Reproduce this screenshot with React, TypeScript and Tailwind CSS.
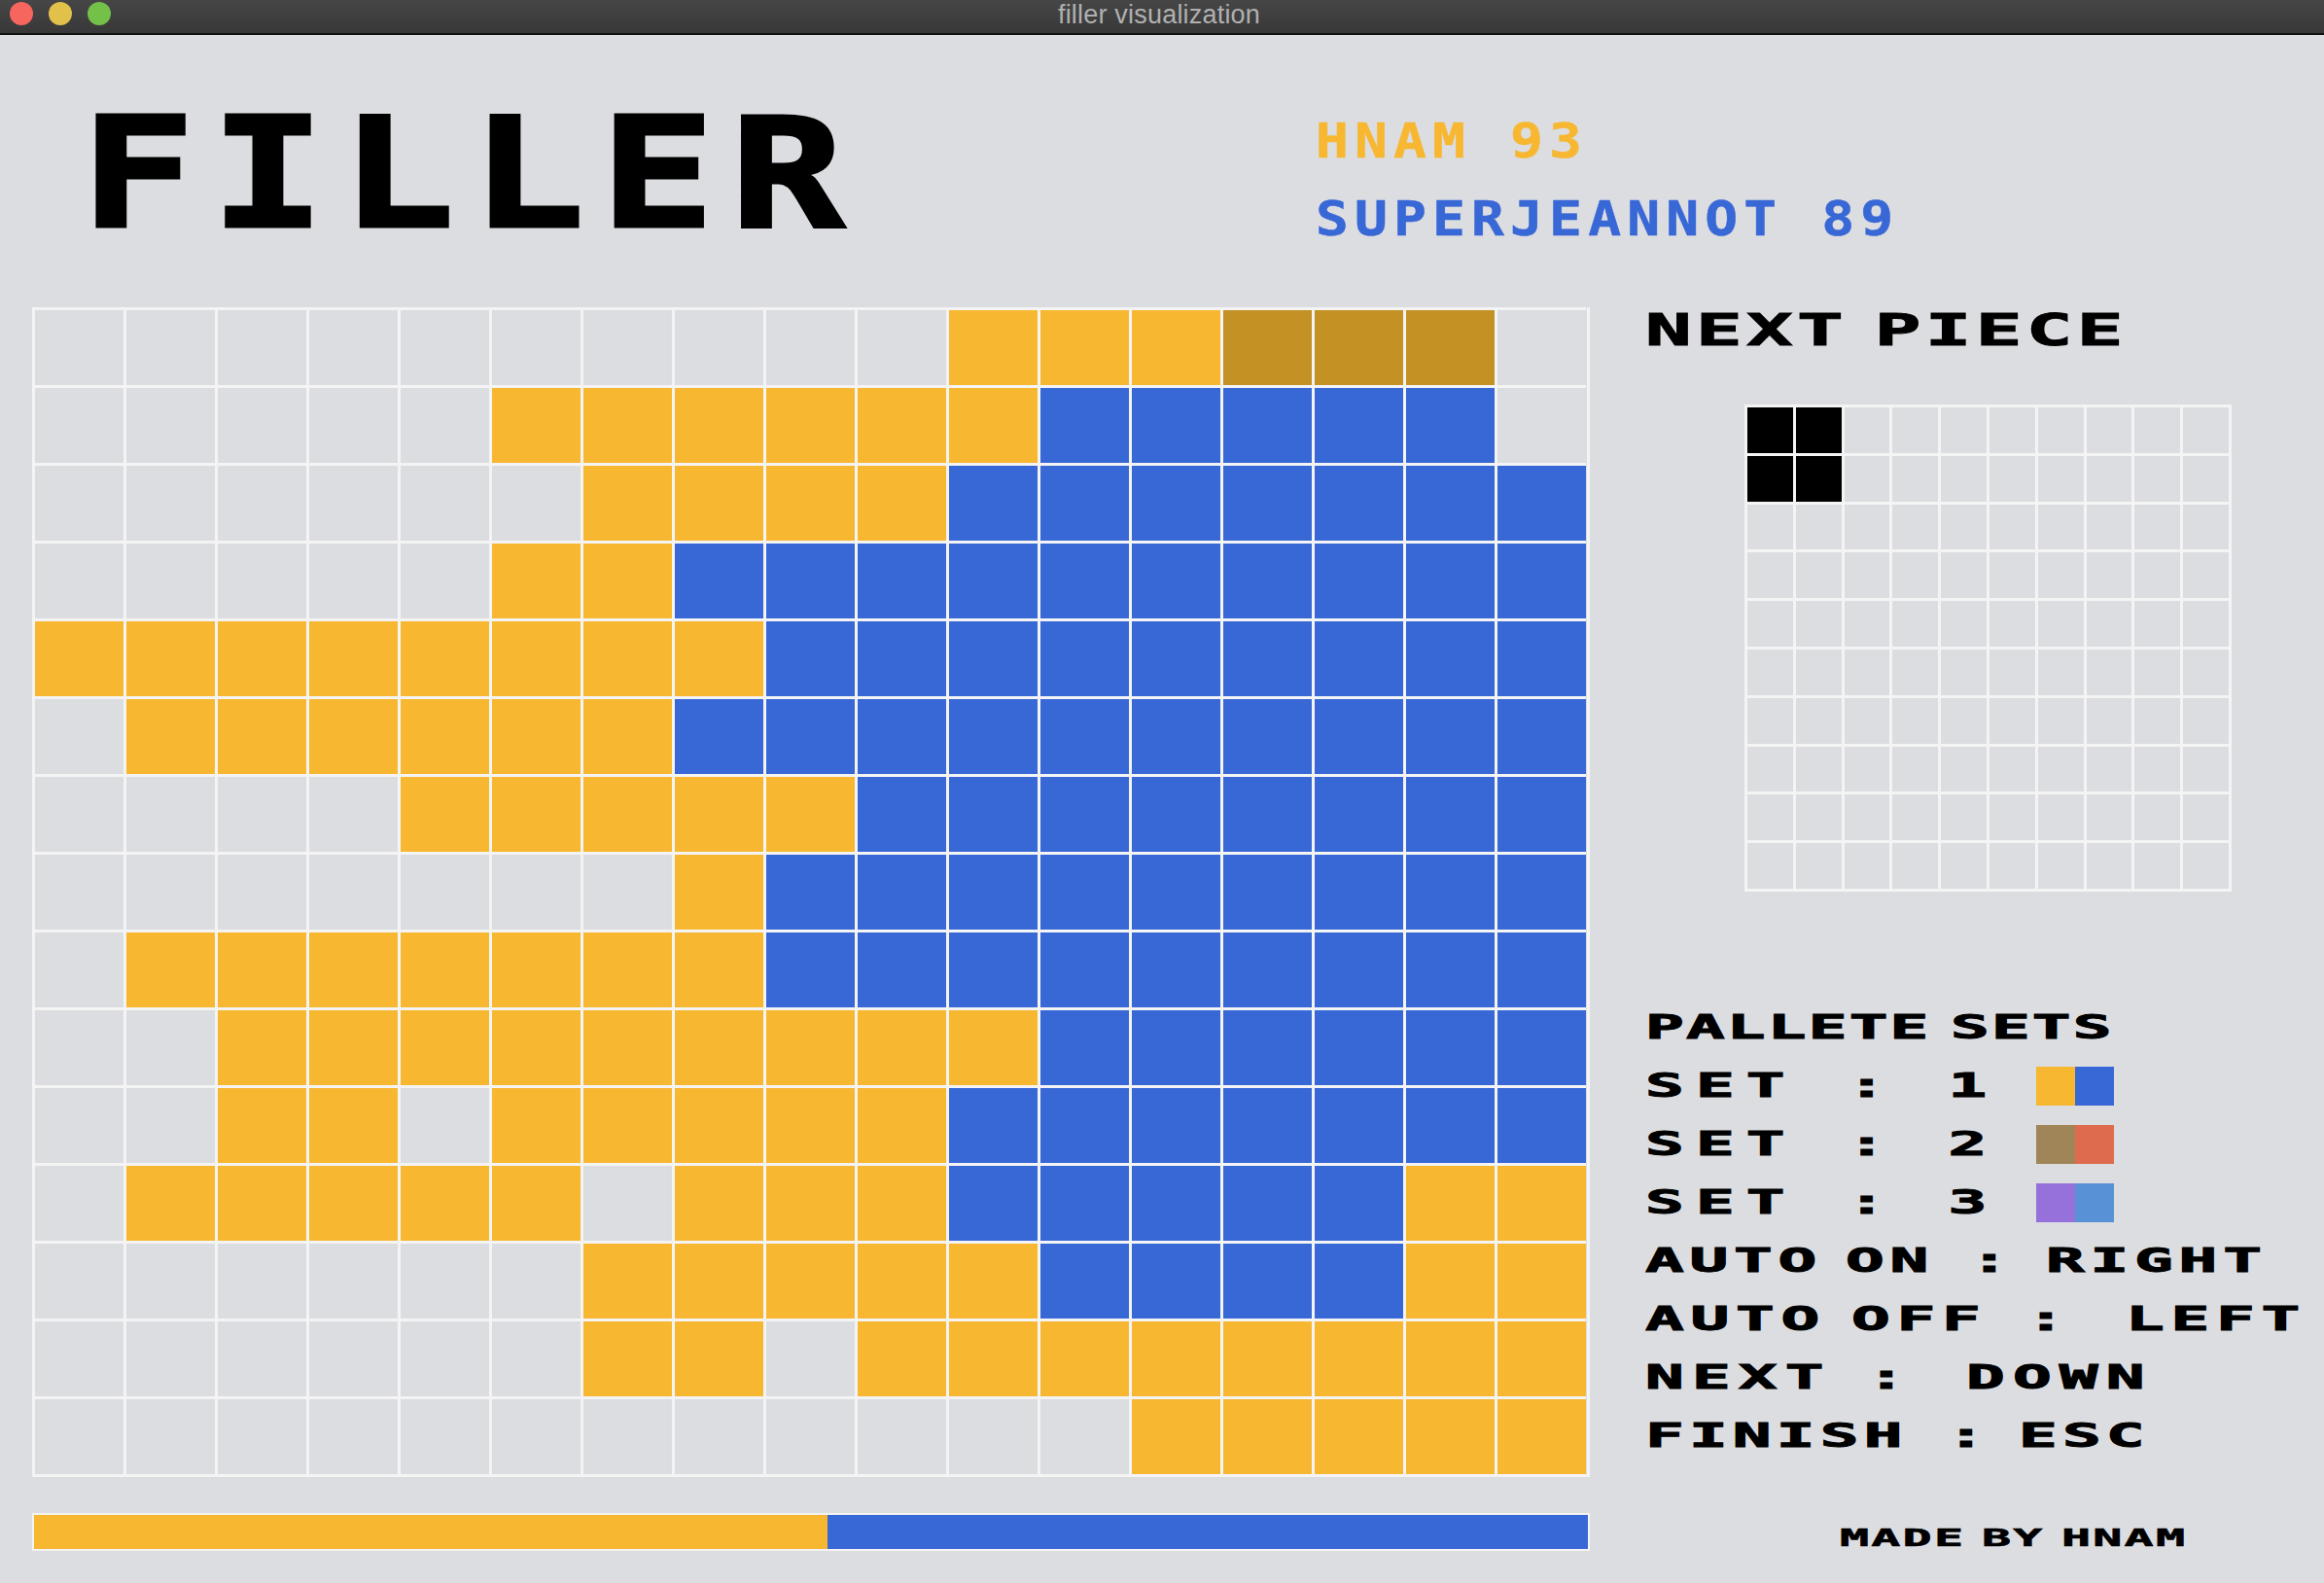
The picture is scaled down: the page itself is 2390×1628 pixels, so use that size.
const board = [
  "..........YYYDDD.",
  ".....YYYYYYBBBBB.",
  "......YYYYBBBBBBB",
  ".....YYBBBBBBBBBB",
  "YYYYYYYYBBBBBBBBB",
  ".YYYYYYBBBBBBBBBB",
  "....YYYYYBBBBBBBB",
  ".......YBBBBBBBBB",
  ".YYYYYYYBBBBBBBBB",
  "..YYYYYYYYYBBBBBB",
  "..YY.YYYYYBBBBBBB",
  ".YYYYY.YYYBBBBBYY",
  "......YYYYYBBBBYY",
  "......YY.YYYYYYYY",
  "............YYYYY",
];

const fills: Record<string, string> = {
  Y: "bg-[#f7b731]",
  B: "bg-[#3867d6]",
  D: "bg-[#c49125]",
};

function Board() {
  return (
    <div className="grid grid-cols-[repeat(17,94px)] grid-rows-[repeat(15,80px)] w-[1602px] border-r-[3px] border-b-[3px] border-[#f4f4f5]">
      {board.flatMap((row, y) =>
        row.split("").map((c, x) => (
          <div key={`${y}-${x}`} className="border-l-[3px] border-t-[3px] border-[#f4f4f5]">
            {c !== "." && <div className={`h-full ${fills[c]}`} />}
          </div>
        ))
      )}
    </div>
  );
}

function NextPiece() {
  const cells = Array.from({ length: 100 }, (_, i) => i);
  return (
    <div className="grid grid-cols-[repeat(10,49.8px)] grid-rows-[repeat(10,49.8px)] w-[501px] border-r-[3px] border-b-[3px] border-[#f4f4f5]">
      {cells.map((i) => (
        <div key={i} className="border-l-[3px] border-t-[3px] border-[#f4f4f5]">
          {(i === 0 || i === 1 || i === 10 || i === 11) && <div className="h-full bg-black" />}
        </div>
      ))}
    </div>
  );
}

function Swatch({ left, right }: { left: string; right: string }) {
  return (
    <div className="flex h-10 w-20">
      <div className={`w-10 ${left}`} />
      <div className={`w-10 ${right}`} />
    </div>
  );
}

const lineText =
  "flex origin-left scale-x-[2] whitespace-pre text-[33px] leading-none font-bold text-black [-webkit-text-stroke-width:1px]";

export default function App() {
  return (
    <div className="w-[2390px] h-[1628px] overflow-hidden bg-[#dcdde1] font-['DejaVu_Sans_Mono',monospace]">
      {/* Title bar */}
      <div className="relative flex h-9 items-center justify-center border-b-2 border-[#111] bg-gradient-to-b from-[#464646] to-[#383838] pr-[6px] pb-[4px]">
        <div className="absolute left-[10px] top-[2px] flex gap-4">
          <span className="h-6 w-6 rounded-full bg-[#f6655e]" />
          <span className="h-6 w-6 rounded-full bg-[#e2c14b]" />
          <span className="h-6 w-6 rounded-full bg-[#74c14a]" />
        </div>
        <span className="font-['Liberation_Sans',sans-serif] text-[27px] leading-none tracking-[0.2px] text-[#b0b0b0]">
          filler visualization
        </span>
      </div>

      {/* Header */}
      <div className="flex h-[280px]">
        <div className="w-[1353px] pl-[83px] pt-[65px]">
          <div className="origin-left scale-x-[1.25] whitespace-pre text-[156px] leading-none font-bold tracking-[13px] text-black [-webkit-text-stroke-width:3px]">
            FILLER
          </div>
        </div>
        <div className="origin-left scale-x-[1.15] whitespace-pre pt-[85px] text-[49px] leading-none font-bold tracking-[5.3px] [-webkit-text-stroke-width:0.5px]">
          <div className="text-[#f7b731]">HNAM 93</div>
          <div className="mt-[31px] text-[#3867d6]">SUPERJEANNOT 89</div>
        </div>
      </div>

      <div className="flex">
        {/* Left column */}
        <div className="ml-[33px] w-[1602px]">
          <Board />
          <div className="mt-[37px] flex h-[39px] border-2 border-[#f4f4f5]">
            <div className="w-[816px] bg-[#f7b731]" />
            <div className="flex-1 bg-[#3867d6]" />
          </div>
        </div>

        {/* Right column */}
        <div className="ml-[57px] w-[698px]">
          <div className="flex h-12 items-center">
            <div className="flex origin-left scale-x-[1.8] whitespace-pre text-[44px] leading-none font-bold tracking-[2.4px] text-black [-webkit-text-stroke-width:1px]">
              <span className="w-[131px]">NEXT</span>
              <span>PIECE</span>
            </div>
          </div>
          <div className="ml-[102px] mt-[52px]">
            <NextPiece />
          </div>

          <div className="mt-[110px]">
            <div className="flex h-[60px] items-center">
              <div className={`${lineText} tracking-[1.1px]`}>
                <span className="w-[157px]">PALLETE</span>
                <span>SETS</span>
              </div>
            </div>
            <div className="flex h-[60px] items-center">
              <div className="w-[402px]">
                <div className={`${lineText} tracking-[6.1px]`}>SET : 1</div>
              </div>
              <Swatch left="bg-[#f7b731]" right="bg-[#3867d6]" />
            </div>
            <div className="flex h-[60px] items-center">
              <div className="w-[402px]">
                <div className={`${lineText} tracking-[6.1px]`}>SET : 2</div>
              </div>
              <Swatch left="bg-[#a08558]" right="bg-[#de6b4e]" />
            </div>
            <div className="flex h-[60px] items-center">
              <div className="w-[402px]">
                <div className={`${lineText} tracking-[6.1px]`}>SET : 3</div>
              </div>
              <Swatch left="bg-[#9670db]" right="bg-[#5891d5]" />
            </div>
            <div className="flex h-[60px] items-center">
              <div className={`${lineText} tracking-[2.9px]`}>
                <span className="w-[103px]">AUTO</span>
                <span className="w-[64px]">ON</span>
                <span className="w-[39px]">:</span>
                <span>RIGHT</span>
              </div>
            </div>
            <div className="flex h-[60px] items-center">
              <div className={`${lineText} tracking-[3.4px]`}>
                <span className="w-[106px]">AUTO</span>
                <span className="w-[90px]">OFF</span>
                <span className="w-[51px]">:</span>
                <span>LEFT</span>
              </div>
            </div>
            <div className="flex h-[60px] items-center">
              <div className={`${lineText} tracking-[4.1px]`}>
                <span className="w-[114px]">NEXT</span>
                <span className="w-[51px]">:</span>
                <span>DOWN</span>
              </div>
            </div>
            <div className="flex h-[60px] items-center">
              <div className={`${lineText} tracking-[2.6px]`}>
                <span className="w-[155px]">FINISH</span>
                <span className="w-[37px]">:</span>
                <span>ESC</span>
              </div>
            </div>
          </div>

          <div className="ml-[200px] mt-[55px] flex h-10 items-center">
            <div className="flex origin-left scale-x-[2] whitespace-pre text-[25px] leading-none font-bold tracking-[1.1px] text-black [-webkit-text-stroke-width:0.6px]">
              <span className="w-[73px]">MADE</span>
              <span className="w-[41px]">BY</span>
              <span>HNAM</span>
            </div>
          </div>
        </div>
      </div>
    </div>
  );
}
